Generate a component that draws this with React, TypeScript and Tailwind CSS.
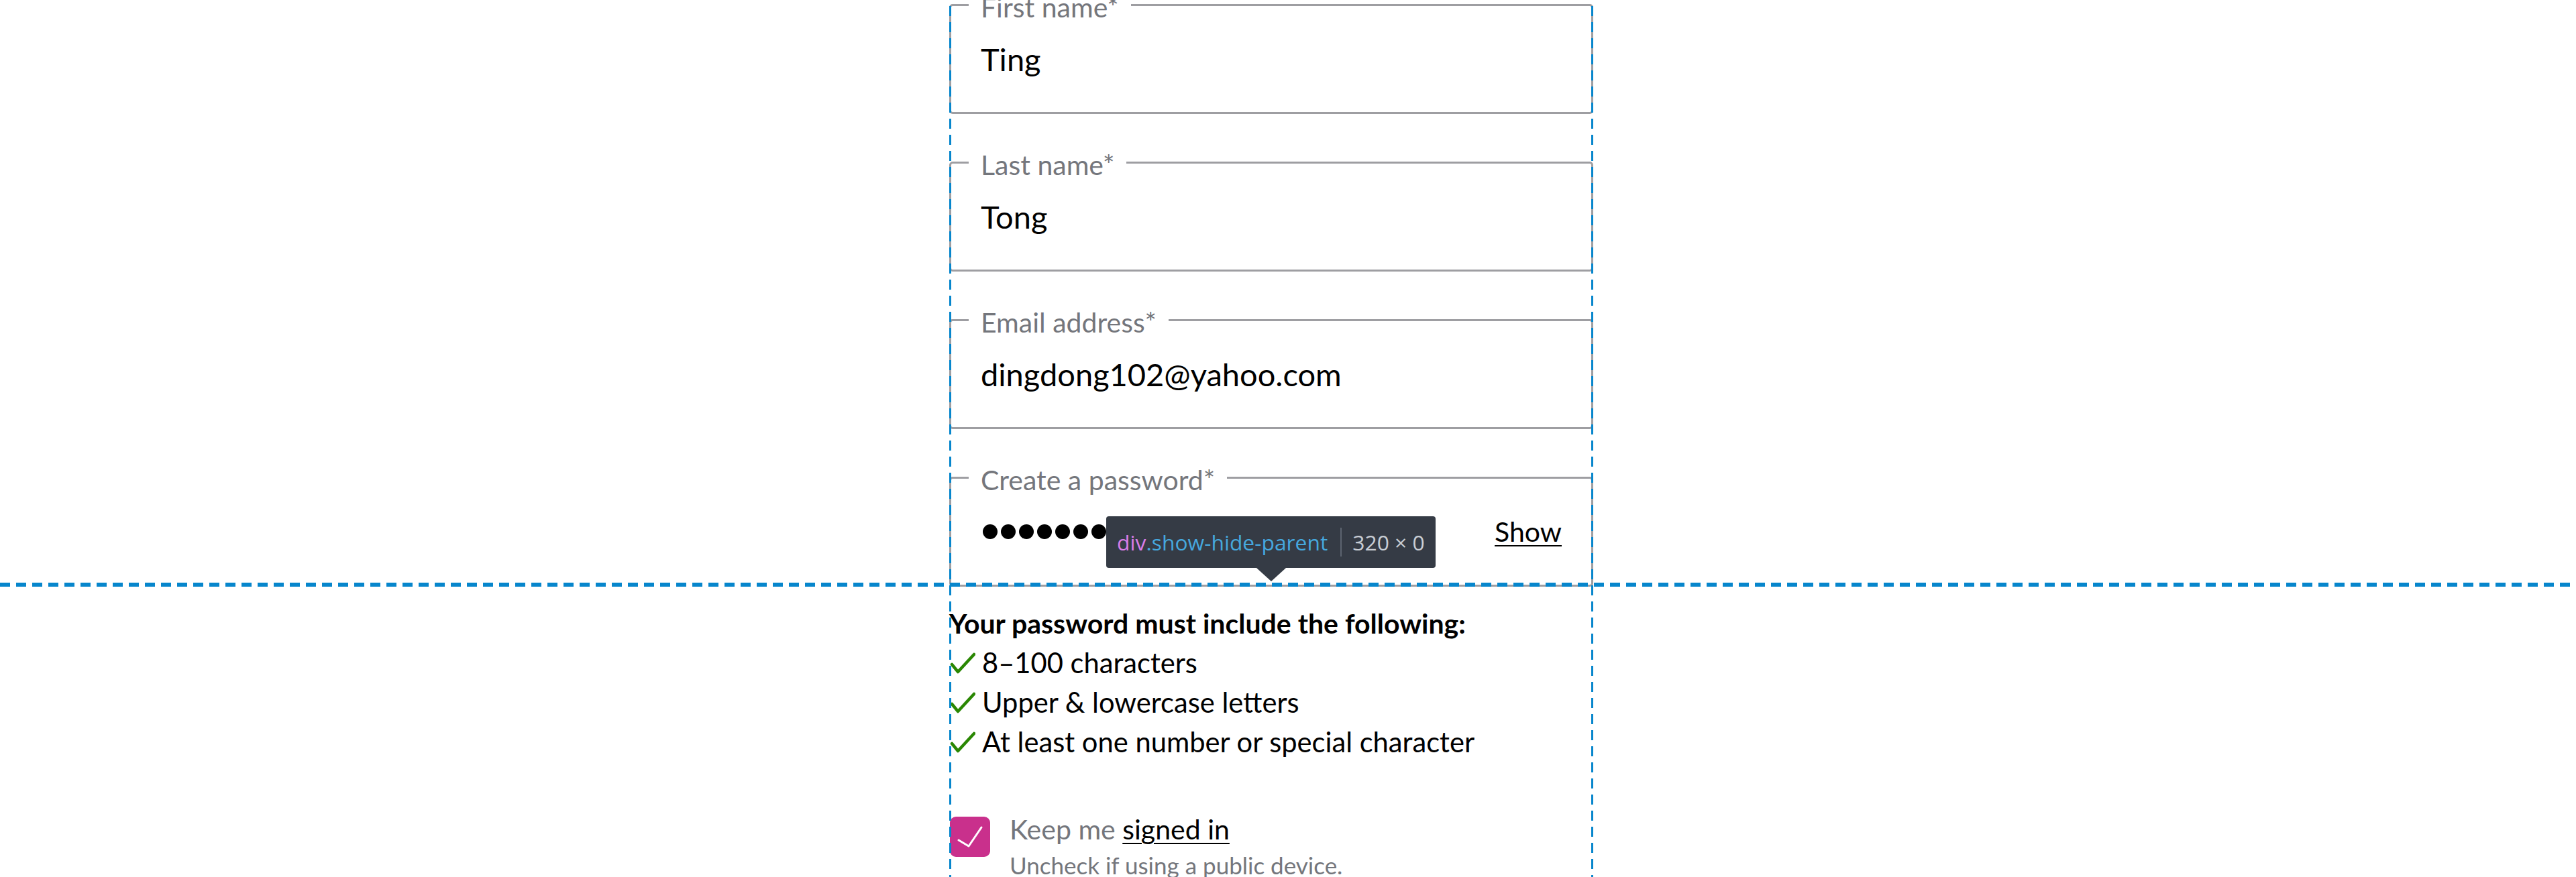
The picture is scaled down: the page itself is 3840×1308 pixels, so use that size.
import React from "react";

function Field({ label, children }: { label: string; children: React.ReactNode }) {
  return (
    <fieldset className="m-0 rounded-[5px] border-[3px] border-[#9e9ea2] px-[44px] pt-[17px] pb-[43px]">
      <legend className="-ml-[18px] px-[18px] pt-[8px] text-[41px] leading-[48px] text-[#74767c]">{label}</legend>
      <div className="flex h-[72px] items-center text-[47px] text-black">{children}</div>
    </fieldset>
  );
}

function Check() {
  return (
    <svg width="38" height="34" viewBox="0 0 38 34" className="shrink-0">
      <path d="M3 19 L12 30 L36 4" fill="none" stroke="#2a8703" strokeWidth="4.5" strokeLinecap="round" strokeLinejoin="round" />
    </svg>
  );
}

const rules = ["8–100 characters", "Upper & lowercase letters", "At least one number or special character"];

export default function App() {
  return (
    <div className="relative h-[1308px] overflow-hidden bg-white font-['Lato',sans-serif]">
      <div className="ml-[1415px] -mt-[21px] w-[960px]">
        <div className="flex flex-col gap-[44px]">
          <Field label="First name*">Ting</Field>
          <Field label="Last name*">Tong</Field>
          <Field label="Email address*">dingdong102@yahoo.com</Field>
          <Field label="Create a password*">
            <div className="flex w-full items-center justify-between">
              <div className="flex items-center gap-[5px] pl-[3px]">
                {Array.from({ length: 10 }).map((_, i) => (
                  <span key={i} className="h-[22px] w-[22px] rounded-full bg-black" />
                ))}
              </div>
              <span className="text-[41px] underline decoration-2 underline-offset-[5px]">Show</span>
            </div>
          </Field>
        </div>

        <div className="mt-[25px] leading-[59px] text-black">
          <p className="text-[41px] font-bold">Your password must include the following:</p>
          <ul className="text-[41.7px]">
            {rules.map((r) => (
              <li key={r} className="flex items-center">
                <span className="ml-px mr-[10px] flex">
                  <Check />
                </span>
                <span>{r}</span>
              </li>
            ))}
          </ul>
        </div>

        <div className="mt-[71px] flex items-start">
          <div className="ml-px mt-[11px] h-[60px] w-[60px] shrink-0 rounded-[9px] bg-[#c9308c]">
            <svg width="60" height="60" viewBox="0 0 60 60">
              <path d="M13 35 L28 44 L47 16" fill="none" stroke="#fff" strokeWidth="3" strokeLinecap="round" strokeLinejoin="round" />
            </svg>
          </div>
          <div className="ml-[29px]">
            <p className="text-[41px] leading-[59px] text-[#74767c]">
              Keep me <span className="text-black underline decoration-2 underline-offset-[5px]">signed in</span>
            </p>
            <p className="text-[35px] leading-[48px] text-[#74767c]">Uncheck if using a public device.</p>
          </div>
        </div>
      </div>

      {/* devtools overlay guides */}
      <div className="absolute top-0 left-[1415px] h-full w-[3px] bg-[repeating-linear-gradient(to_bottom,transparent_0_9px,#0786cc_9px_24px)]" />
      <div className="absolute top-0 left-[2372px] h-full w-[3px] bg-[repeating-linear-gradient(to_bottom,transparent_0_9px,#0786cc_9px_24px)]" />
      <div className="absolute top-[869px] left-0 h-[6px] w-full bg-[repeating-linear-gradient(to_right,#0786cc_0_15px,transparent_15px_24px)]" />

      <div className="absolute top-[770px] left-[1649px] h-[77px] w-[491px] rounded-[4px] bg-[#353b45] font-['Open_Sans',sans-serif]">
        <div className="flex h-full items-center pl-[16px] text-[31.8px]">
          <span className="text-[#d97de8]">div</span>
          <span className="text-[#46a8de]">.show-hide-parent</span>
          <span className="ml-[19px] mr-[16px] h-[43px] w-[2px] bg-[#5d6470]" />
          <span className="text-[#c8cdd4]">320 × 0</span>
        </div>
        <div className="absolute top-[77px] left-[224px] h-0 w-0 border-x-[22px] border-t-[20px] border-x-transparent border-t-[#353b45]" />
      </div>
    </div>
  );
}
